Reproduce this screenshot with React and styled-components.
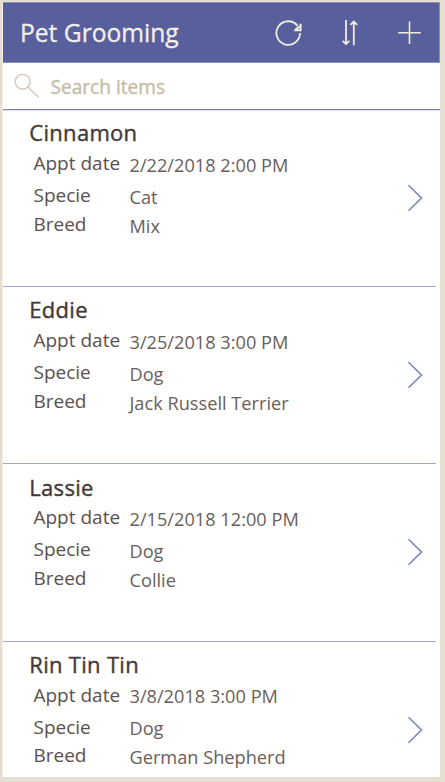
import React from "react";
import styled, { createGlobalStyle } from "styled-components";

const GlobalStyle = createGlobalStyle`
  * { box-sizing: border-box; }
  body {
    margin: 0;
    background: #e5dfd1;
    font-family: "Open Sans", "Noto Sans", sans-serif;
    overflow: hidden;
  }
`;

const Frame = styled.div`
  width: 445px;
  height: 782px;
  padding: 2px 5px 5px 2px;
  background: #e5dfd1;
`;

const Screen = styled.main`
  display: flex;
  flex-direction: column;
  width: 438px;
  height: 775px;
  background: #fff;
  border-left: 1px solid #f3f0e9;
  overflow: hidden;
`;

const Header = styled.header`
  display: flex;
  align-items: center;
  flex: none;
  height: 61px;
  padding-left: 17px;
  background: #585f9d;
  border: solid #8a8fb9;
  border-width: 1px 1px 1px 0;
`;

const Title = styled.h1`
  flex: 1;
  margin: 1px 0 0;
  font-size: 24.6px;
  line-height: 34px;
  font-weight: 400;
  -webkit-text-stroke: 0.3px currentColor;
  color: #f3efe6;
  white-space: nowrap;
`;

const Actions = styled.div`
  display: flex;
  align-items: center;
`;

const IconButton = styled.button`
  display: flex;
  align-items: center;
  justify-content: center;
  width: 60.3px;
  height: 59px;
  padding: 0;
  border: 0;
  background: none;
  color: #f1ece3;
`;

const SearchBar = styled.div`
  display: flex;
  align-items: center;
  flex: none;
  height: 47px;
  padding-left: 10.5px;
  border-bottom: 1px solid #7c82b2;
  box-shadow: 0 1px 0 #dcdeeb;
  color: #d3c9b2;
`;

const Placeholder = styled.span`
  margin: 1px 0 0 11px;
  font-size: 19.1px;
  line-height: 28px;
  -webkit-text-stroke: 0.35px currentColor;
  color: #c5bda5;
`;

const List = styled.ul`
  flex: 1;
  margin: 0;
  padding: 0;
  list-style: none;
  overflow: hidden;
`;

const Row = styled.li`
  display: flex;
  align-items: center;
  justify-content: space-between;
  width: 433px;
  height: 177.2px;
  padding-right: 12px;
  border-bottom: 1px solid #a0a6d0;
`;

const Details = styled.div`
  align-self: flex-start;
  padding: 7.2px 0 0 26.3px;
`;

const Name = styled.h2`
  margin: 0;
  font-size: 22px;
  line-height: 30px;
  font-weight: 400;
  letter-spacing: 0.3px;
  -webkit-text-stroke: 0.4px currentColor;
  color: #443a38;
`;

const Fields = styled.dl`
  display: grid;
  grid-template-columns: 96px auto;
  grid-template-rows: 32px 28.8px 29px;
  margin: 1.8px 0 0 4.2px;
  white-space: nowrap;
`;

const Label = styled.dt`
  font-size: 19px;
  line-height: 28px;
  color: #5b504e;
`;

const Value = styled.dd`
  margin: 0;
  padding-top: 1.8px;
  font-size: 18.2px;
  line-height: 28px;
  color: #6a5e5c;
`;

const Icon = styled.svg`
  display: block;
  flex: none;
  fill: none;
  stroke: currentColor;
`;

const Chevron = styled(Icon)`
  color: #7c85b8;
`;

const appointments = [
  { name: "Cinnamon", date: "2/22/2018 2:00 PM", specie: "Cat", breed: "Mix" },
  { name: "Eddie", date: "3/25/2018 3:00 PM", specie: "Dog", breed: "Jack Russell Terrier" },
  { name: "Lassie", date: "2/15/2018 12:00 PM", specie: "Dog", breed: "Collie" },
  { name: "Rin Tin Tin", date: "3/8/2018 3:00 PM", specie: "Dog", breed: "German Shepherd" },
];

function Appointment({ name, date, specie, breed }) {
  return (
    <Row>
      <Details>
        <Name>{name}</Name>
        <Fields>
          <Label>Appt date</Label>
          <Value>{date}</Value>
          <Label>Specie</Label>
          <Value>{specie}</Value>
          <Label>Breed</Label>
          <Value>{breed}</Value>
        </Fields>
      </Details>
      <Chevron width="18" height="28" viewBox="0 0 18 28" strokeWidth="1.6">
        <path d="M2.5 1.2 15.5 14 2.5 26.8" />
      </Chevron>
    </Row>
  );
}

export default function App() {
  return (
    <>
      <GlobalStyle />
      <Frame>
        <Screen>
          <Header>
            <Title>Pet Grooming</Title>
            <Actions>
              <IconButton aria-label="Refresh">
                <Icon width="28" height="28" viewBox="0 0 28 28" strokeWidth="1.8">
                  <path d="M26 14A11.8 11.8 0 1 1 23.6 6.9" />
                  <path d="M26.6 4.8V11.2H20.2M21.6 10.4 26 7.2" strokeWidth="2" />
                </Icon>
              </IconButton>
              <IconButton aria-label="Sort">
                <Icon width="18" height="28" viewBox="0 0 18 28" strokeWidth="1.8">
                  <path d="M6 1V24.5M2.6 21.8 6 25 9.4 21.8M13.8 26.2V3M10.4 5.8 13.8 2.6 17.2 5.8" />
                </Icon>
              </IconButton>
              <IconButton aria-label="Add">
                <Icon width="24" height="24" viewBox="0 0 24 24" strokeWidth="1.6">
                  <path d="M12.5 .5V23M1.2 11.8H23.8" />
                </Icon>
              </IconButton>
            </Actions>
          </Header>
          <SearchBar>
            <Icon width="26" height="26" viewBox="0 0 26 26" strokeWidth="1.4">
              <circle cx="8.6" cy="8.8" r="7.4" />
              <path d="M14 14 24.5 24.3" />
            </Icon>
            <Placeholder>Search items</Placeholder>
          </SearchBar>
          <List>
            {appointments.map((item) => (
              <Appointment key={item.name} {...item} />
            ))}
          </List>
        </Screen>
      </Frame>
    </>
  );
}
